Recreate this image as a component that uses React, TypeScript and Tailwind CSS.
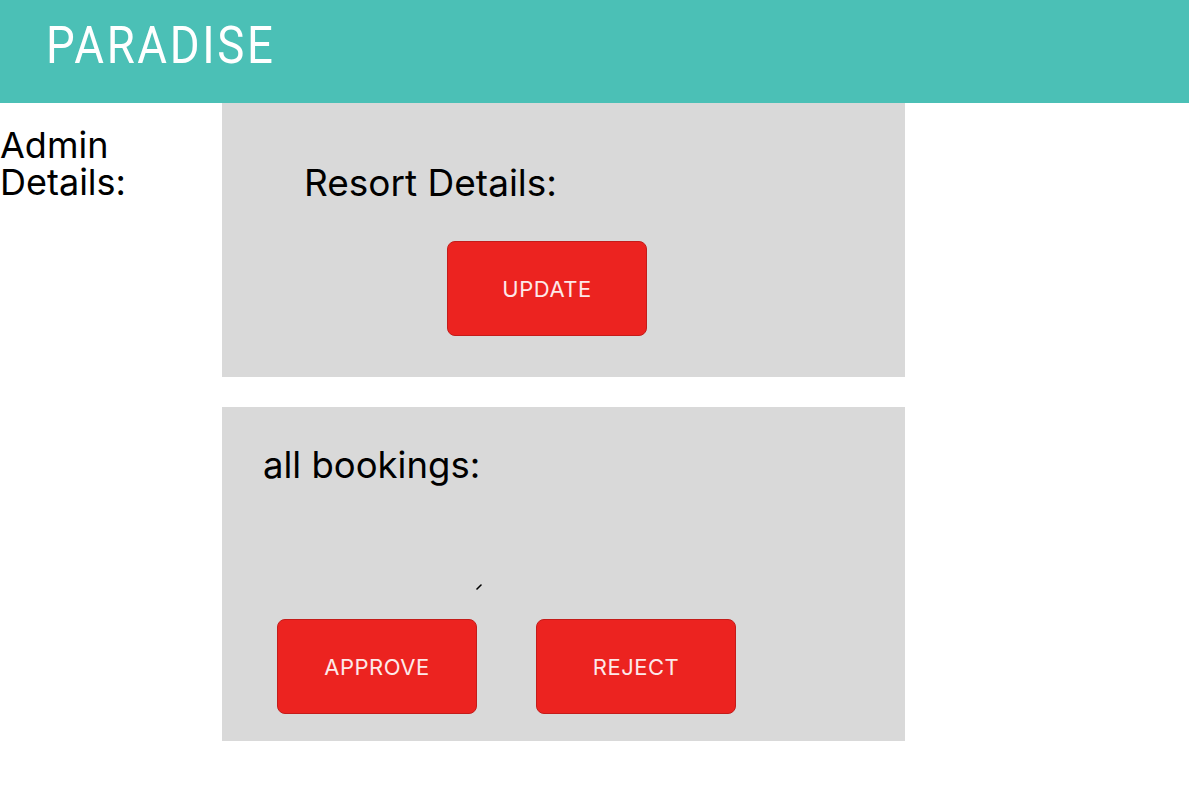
import React from "react";

function Btn({ label }: { label: string }) {
  return (
    <button className="w-[200px] h-[95px] rounded-[8px] bg-[#ec2320] border border-[#c41c1a] text-[#fde9e9] text-[22px] tracking-[0.5px] font-['Inter',sans-serif] flex items-center justify-center pt-[2px]">
      {label}
    </button>
  );
}

export default function App() {
  return (
    <div className="w-[1189px] h-[801px] bg-white font-['Inter',sans-serif] text-black overflow-hidden">
      <header className="h-[103px] bg-[#4bc0b6] flex items-center pl-[46px]">
        <h1 className="text-white text-[52px] font-normal tracking-[3px] font-['Roboto',sans-serif] leading-none mt-[-11px] origin-left scale-x-[0.876]">
          PARADISE
        </h1>
      </header>
      <div className="flex">
        <div className="w-[222px] pt-[24px] text-[36px] leading-[37px]">
          Admin
          <br />
          Details:
        </div>
        <div className="flex flex-col gap-[30px]">
          <section className="w-[683px] h-[274px] bg-[#d9d9d9] pt-[58px]">
            <div className="pl-[82px] text-[37px] leading-[44px]">Resort Details:</div>
            <div className="pl-[225px] mt-[36px]">
              <Btn label="UPDATE" />
            </div>
          </section>
          <section className="w-[683px] h-[334px] bg-[#d9d9d9] pt-[36px] relative">
            <div className="pl-[41px] text-[36.5px] leading-[44px]">all bookings:</div>
            <svg className="absolute left-[254px] top-[177px]" width="6" height="6" viewBox="0 0 6 6">
              <path d="M1 5 L5 1" stroke="#000" strokeWidth="1.6" strokeLinecap="round" />
            </svg>
            <div className="pl-[55px] mt-[132px] flex gap-[59px]">
              <Btn label="APPROVE" />
              <Btn label="REJECT" />
            </div>
          </section>
        </div>
      </div>
    </div>
  );
}
